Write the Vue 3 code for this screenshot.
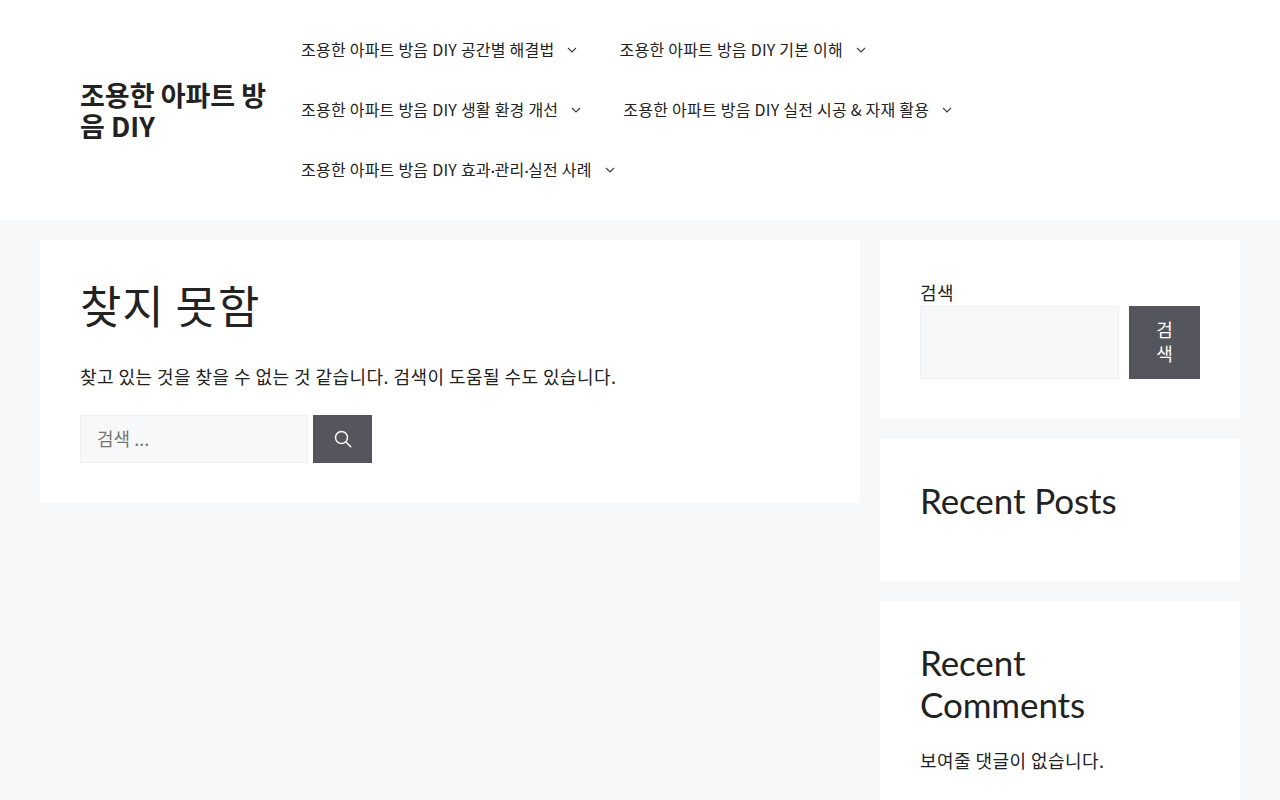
<script setup>
const menu = [
  ['조용한 아파트 방음 DIY 공간별 해결법', '조용한 아파트 방음 DIY 기본 이해'],
  ['조용한 아파트 방음 DIY 생활 환경 개선', '조용한 아파트 방음 DIY 실전 시공 & 자재 활용'],
  ['조용한 아파트 방음 DIY 효과·관리·실전 사례'],
]
</script>

<template>
  <div class="page">
    <header class="site-header">
      <div class="site-title">조용한 아파트 방음 DIY</div>
      <nav class="nav">
        <div v-for="(row, i) in menu" :key="i" class="nav-row">
          <a v-for="item in row" :key="item" class="nav-item" href="#" @click.prevent>
            <span class="nav-label">
              <template v-for="(part, p) in item.split('·')" :key="p"><span v-if="p" class="dot">·</span>{{ part }}</template>
            </span>
            <svg class="chev" viewBox="0 0 10 6" width="10" height="6" aria-hidden="true">
              <path d="M1 1l4 4 4-4" fill="none" stroke="currentColor" stroke-width="1.1" />
            </svg>
          </a>
        </div>
      </nav>
    </header>

    <div class="container">
      <main class="content">
        <h1>찾지 못함</h1>
        <p class="lead">찾고 있는 것을 찾을 수 없는 것 같습니다. 검색이 도움될 수도 있습니다.</p>
        <form class="search" @submit.prevent>
          <input class="search-input" type="search" placeholder="검색 ..." />
          <button class="search-btn" type="submit" aria-label="검색">
            <svg viewBox="0 0 18 18" width="18" height="18" aria-hidden="true">
              <circle cx="7.5" cy="7.5" r="6" fill="none" stroke="currentColor" stroke-width="1.5" />
              <path d="M12 12l5.2 5.2" fill="none" stroke="currentColor" stroke-width="1.5" />
            </svg>
          </button>
        </form>
      </main>

      <aside class="sidebar">
        <section class="widget">
          <label class="w-label" for="wsearch">검색</label>
          <form class="w-search" @submit.prevent>
            <input id="wsearch" class="w-input" type="search" />
            <button class="w-btn" type="submit">검색</button>
          </form>
        </section>
        <section class="widget">
          <h2>Recent Posts</h2>
        </section>
        <section class="widget">
          <h2>Recent Comments</h2>
          <p class="w-text">보여줄 댓글이 없습니다.</p>
        </section>
      </aside>
    </div>
  </div>
</template>

<style>
html, body { margin: 0; background: #f7f8f9; overflow: hidden; }
</style>

<style scoped>
.page {
  font-family: "Noto Sans CJK KR", sans-serif;
  font-size: 18px;
  line-height: 26px;
  color: #222222;
  background: #f7f8f9;
  min-height: 800px;
  letter-spacing: .025em;
}
.site-header {
  display: flex;
  align-items: center;
  height: 220px;
  box-sizing: border-box;
  padding: 20px 80px;
  background: #fff;
}
.site-title {
  width: 201px;
  flex: none;
  font-size: 27px;
  font-weight: 700;
  line-height: 31px;
  color: #222222;
  letter-spacing: 0;
}
.nav { display: flex; flex-direction: column; }
.nav-row { display: flex; height: 60px; }
.nav-item {
  display: flex;
  align-items: center;
  padding: 0 20px;
  font-size: 16px;
  color: #222222;
  text-decoration: none;
  letter-spacing: .015em;
}
.nav-label { position: relative; top: -1px; }
.dot { font-family: "Lato", sans-serif; font-weight: 400; letter-spacing: -.5px; }
.chev { margin-left: 13px; margin-right: 2px; color: #3a3a3a; }
.container {
  display: flex;
  gap: 20px;
  align-items: flex-start;
  padding: 20px 40px 0;
}
.content {
  width: 820px;
  flex: none;
  box-sizing: border-box;
  padding: 40px;
  background: #fff;
}
h1 {
  margin: 0 0 33px;
  font-size: 45px;
  font-weight: 400;
  line-height: 50px;
  letter-spacing: .02em;
}
.lead { margin: 0 0 26px; }
.search { display: flex; gap: 5px; }
.search-input {
  width: 228px;
  height: 48px;
  box-sizing: border-box;
  padding: 8px 16px 10px;
  border: 1px solid #eff0f2;
  border-radius: 0;
  outline: 0;
  background: #f7f8f9;
  font: inherit;
  font-size: 18px;
  letter-spacing: 0;
  color: #666;
}
.search-input::placeholder { color: #757575; opacity: 1; }
.search-btn {
  display: flex;
  align-items: center;
  justify-content: center;
  width: 59px;
  height: 48px;
  padding: 0;
  border: 0;
  background: #55555e;
  color: #fff;
}
.sidebar {
  width: 360px;
  flex: none;
  display: flex;
  flex-direction: column;
  gap: 20px;
}
.widget {
  box-sizing: border-box;
  padding: 40px;
  background: #fff;
}
.w-label { display: block; line-height: 24px; padding-bottom: 2px; }
.w-search { display: flex; gap: 10px; }
.w-input {
  flex: 1;
  min-width: 0;
  box-sizing: border-box;
  height: 73px;
  border: 1px solid #eff0f2;
  border-radius: 0;
  outline: 0;
  background: #f7f8f9;
  padding: 0 15px;
}
.w-btn {
  width: 71px;
  flex: none;
  box-sizing: border-box;
  padding: 10px 20px 14px;
  border: 0;
  background: #55555e;
  color: #fff;
  font: inherit;
  line-height: 24px;
}
h2 {
  max-width: 270px;
  margin: 0 0 20px;
  font-family: "Lato", "Noto Sans CJK KR", sans-serif;
  font-size: 35px;
  font-weight: 400;
  line-height: 42px;
  letter-spacing: -.1px;
}
.w-text { margin: 0; padding-top: 2px; }
</style>
